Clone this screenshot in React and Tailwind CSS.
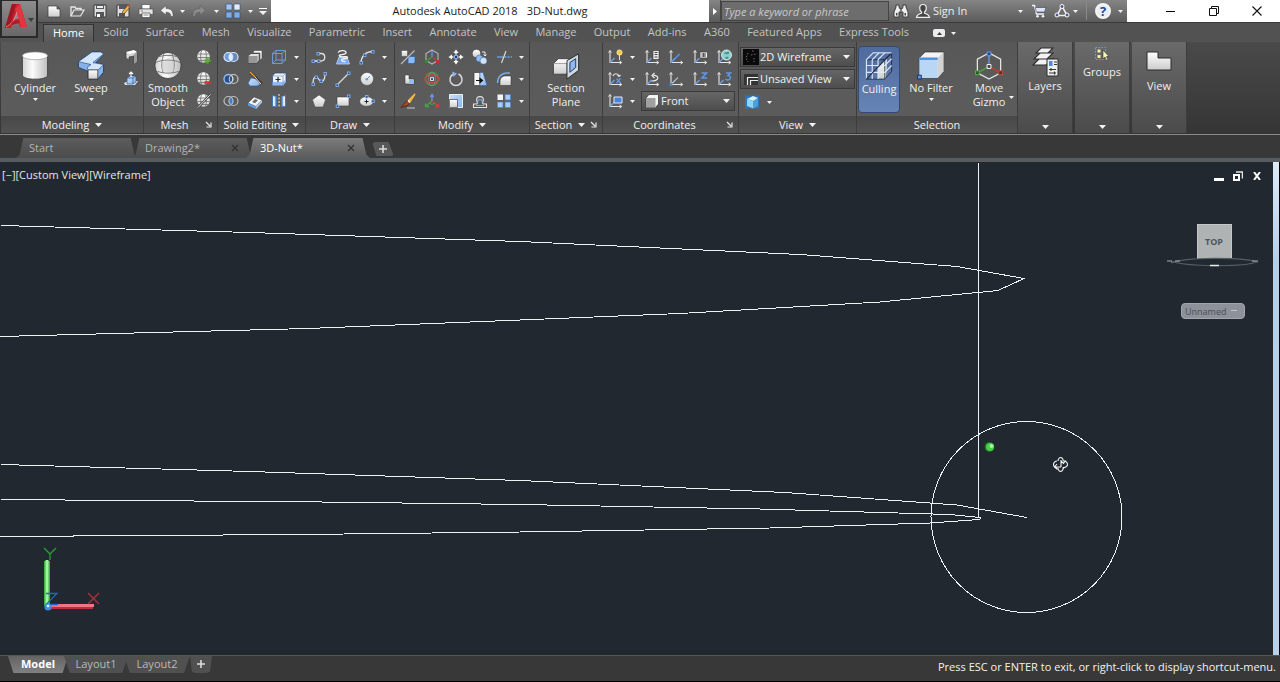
import React, { useState } from "react";

const ribbonTabs = [
  "Home",
  "Solid",
  "Surface",
  "Mesh",
  "Visualize",
  "Parametric",
  "Insert",
  "Annotate",
  "View",
  "Manage",
  "Output",
  "Add-ins",
  "A360",
  "Featured Apps",
  "Express Tools",
];

/* ---------- icon helpers ---------- */

const W = "url(#gWhite)";
const B = "url(#gBlue)";
const G = "url(#gGray)";

function Icon({ children, className = "h-4 w-4", box = "0 0 16 16" }) {
  return (
    <svg viewBox={box} className={`${className} shrink-0`} fill="none" aria-hidden="true">
      {children}
    </svg>
  );
}

function Caret({ className = "h-[3px] w-[5px]" }) {
  return (
    <svg viewBox="0 0 6 4" preserveAspectRatio="none" className={`${className} shrink-0`} aria-hidden="true">
      <path d="M0 0h6L3 4z" fill="#f2f2f2" />
    </svg>
  );
}

// small square node used on the curve icons
function Node({ x, y }) {
  return <rect x={x - 1} y={y - 1} width="2.5" height="2.5" fill="#2f4a78" stroke="#86b0ee" strokeWidth="0.9" />;
}

// the x / y axes shared by the UCS icons
function Axes() {
  return (
    <>
      <path d="M3 2v11.5h11" stroke="#e6e6e6" strokeWidth="1.1" />
      <path d="M1.6 3.6L3 1.4l1.4 2.2M12.6 12l2.2 1.5-2.2 1.5" stroke="#e6e6e6" />
      <path d="M3 13.5L7.5 9" stroke="#6fa0ea" strokeWidth="1.2" />
    </>
  );
}

const globe = (
  <>
    <circle cx="7.5" cy="7.5" r="6.2" fill={W} />
    <path d="M2 5h11M1.5 8.5h12M3 11.5h9M5.5 1.8c-1.2 3-1.2 8 0 11.4M9.5 1.8c1.2 3 1.2 8 0 11.4" stroke="#6c6c6c" strokeWidth="0.8" />
  </>
);

const icons = {
  // quick access
  newFile: (
    <path d="M2 3h9l3 3v8H2zM11 3v3h3" fill={W} stroke="#3b3b3b" strokeWidth="0.7" />
  ),
  open: (
    <>
      <path d="M2 13V4h4l1 1.5h5V7" stroke="#e9e9e9" strokeWidth="1.3" />
      <path d="M2 13l3-6h10l-3.5 6z" fill="#6a6a6a" stroke="#e9e9e9" strokeWidth="1.2" />
    </>
  ),
  save: (
    <>
      <path d="M2 2h12v12H2z" fill="#dedede" stroke="#3a3a3a" />
      <path d="M4 2h8v4H4z" fill="#55595f" />
      <path d="M5 3h6v2H5z" fill="#eee" />
      <path d="M4 9h8v5H4z" fill="#53575c" />
      <path d="M5 11h3v3H5z" fill="#fff" />
    </>
  ),
  saveAs: (
    <>
      <path d="M2 2h12v12H2z" fill="#dedede" stroke="#3a3a3a" />
      <path d="M4 2h8v4H4z" fill="#55595f" />
      <path d="M4 10h6v4H4z" fill="#53575c" />
      <path d="M7 11l1-3 5-6 2 2-5 6z" fill="#f2b649" stroke="#5c3b12" strokeWidth="0.7" />
      <path d="M12 3l2 2 1.2-1.2-2-2z" fill="#d5662d" />
    </>
  ),
  print: (
    <>
      <path d="M4 1.5h8V6H4z" fill="#fff" stroke="#444" strokeWidth="0.6" />
      <path d="M1 6h14v5.5H1z" fill="#e4e4e4" stroke="#444" strokeWidth="0.6" />
      <path d="M4 10h8v4.5H4z" fill="#fff" stroke="#444" strokeWidth="0.7" />
      <path d="M5.5 12h5M3 8h2" stroke="#666" strokeWidth="0.8" />
    </>
  ),
  undo: <path d="M7 2.5L1.5 7.5 7 12V9.3c3 0 4.500.7 5 4.200h2c.5-5.500-2-8-7-8z" fill="#efefef" stroke="#444" strokeWidth="0.5" />,
  redo: <path d="M9 2.500l5.500 5L9 12V9.300c-3 0-4.500.7-5 4.200H2c-.5-5.500 2-8 7-8z" fill="#8b8b8b" stroke="#5a5a5a" strokeWidth="0.5" />,
  tiles: (
    <>
      <path d="M1 1h6v6H1z" fill="#9fc4f3" stroke="#2c4c7c" strokeWidth="0.6" />
      <path d="M9 1h6v6H9z" fill="#e2edfb" stroke="#2c4c7c" strokeWidth="0.6" />
      <path d="M1 9h6v6H1zM9 9h6v6H9z" fill="#7cabe8" stroke="#2c4c7c" strokeWidth="0.6" />
    </>
  ),
  binoculars: (
    <>
      <path d="M3 2h3v2l1 2h2l1-2V2h3v2l2 5v5h-5V9H6v5H1V9l2-5z" fill="#eeeeee" stroke="#333" strokeWidth="0.9" />
      <path d="M3 10h1.500v2.500H3zM11.500 10H13v2.500h-1.500zM7.300 6.500h1.400v2H7.300z" fill="#444" />
    </>
  ),
  user: (
    <path d="M8 1.500c2.300 0 3.300 1.600 3.300 3.600 0 1.700-.8 3.200-1.800 3.900v1.200c2.500.7 4.500 1.200 5 4.100h-13c.5-2.900 2.500-3.400 5-4.100V9c-1-.7-1.800-2.200-1.800-3.900 0-2 1-3.600 3.300-3.600z" fill="#444" stroke="#efefef" strokeWidth="1.200" />
  ),
  cart: (
    <>
      <path d="M1 2.500h2.500L5.500 11h7.500" stroke="#f3f3f3" strokeWidth="1.400" />
      <path d="M4.200 4.500H15L13.500 9H5.300z" fill="#dfe4f4" stroke="#34406b" strokeWidth="0.6" />
      <circle cx="6.500" cy="13.300" r="1.300" fill="#f3f3f3" />
      <circle cx="12" cy="13.300" r="1.300" fill="#f3f3f3" />
    </>
  ),
  exchange: (
    <>
      <path d="M8 3L3 12.500h10z" stroke="#f0f0f0" strokeWidth="1.600" />
      <circle cx="8" cy="3.500" r="2" fill="#4a5b8d" stroke="#fff" />
      <circle cx="3" cy="12" r="2" fill="#4a5b8d" stroke="#fff" />
      <circle cx="13" cy="12" r="2" fill="#4a5b8d" stroke="#fff" />
    </>
  ),

  // modeling
  polysolid: (
    <>
      <path d="M3 3l8-2 3 2v9.500L11 15V7L6 8v3L3 9z" fill="#d6d6d6" stroke="#3c3c3c" strokeWidth="0.7" />
      <path d="M3 3l8-2 3 2-8 2z" fill="#fff" />
      <path d="M11 5.500l3-2.500v9.500L11 15z" fill="#9b9b9b" />
    </>
  ),
  presspull: (
    <>
      <path d="M1 12l4-2h10l-3 4H2z" fill="#e5e5e5" />
      <path d="M4 7l3-2h6v6l-3 2H4z" fill={B} stroke="#2b5796" strokeWidth="0.7" />
      <path d="M4 7h6v6M10 7l3-2" stroke="#2b5796" strokeWidth="0.7" />
      <path d="M8 6V1M6 3l2-2 2 2" stroke="#fff" strokeWidth="1.100" />
    </>
  ),

  // mesh
  meshMore: (
    <>
      {globe}
      <path d="M11.500 8.500v6M8.500 11.500h6" stroke="#56b32b" strokeWidth="2.400" />
    </>
  ),
  meshLess: (
    <>
      {globe}
      <path d="M8.500 11.500h6.500" stroke="#c9392e" strokeWidth="2.600" />
    </>
  ),
  meshCrease: (
    <>
      {globe}
      <path d="M2 14.500L14.500 1.500" stroke="#444" strokeWidth="2.400" />
      <path d="M2 14.500L14.500 1.500" stroke="#e8e8e8" strokeWidth="1" />
    </>
  ),

  // solid editing
  union: (
    <>
      <circle cx="5.500" cy="8" r="4.500" fill="#6f9de0" stroke="#dce9fb" strokeWidth="1.200" />
      <circle cx="10.500" cy="8" r="4.500" fill="#6f9de0" fillOpacity="0.700" stroke="#dce9fb" strokeWidth="1.200" />
      <ellipse cx="8" cy="8" rx="1.900" ry="3.600" fill="#e3eefc" />
    </>
  ),
  subtract: (
    <>
      <circle cx="10.500" cy="8" r="4.500" stroke="#c9c9c9" strokeWidth="1.200" />
      <circle cx="5.500" cy="8" r="4.500" fill="#26508f" stroke="#9cc3f5" strokeWidth="1.300" />
      <path d="M8 4.300c-2.300 2-2.300 5.400 0 7.400 2.200-2 2.200-5.400 0-7.400z" fill="#4d4d4d" stroke="#e8f0fb" strokeWidth="0.800" />
    </>
  ),
  intersect: (
    <>
      <circle cx="5.500" cy="8" r="4.500" stroke="#bdbdbd" strokeWidth="1.200" />
      <circle cx="10.500" cy="8" r="4.500" stroke="#bdbdbd" strokeWidth="1.200" />
      <path d="M8 4.300c-2.300 2-2.300 5.400 0 7.400 2.200-2 2.200-5.400 0-7.400z" fill="#3d7cc9" stroke="#8fbcf2" strokeWidth="0.800" />
    </>
  ),
  extrudeFaces: (
    <>
      <path d="M7 1.500h8v8l-2 1.500V4H6z" fill="#f5f5f5" stroke="#4b4b4b" strokeWidth="0.600" />
      <path d="M1.500 7L4 5h8.500v6L10 14H1.500z" fill="#b5b5b5" stroke="#3d3d3d" strokeWidth="0.700" />
      <path d="M1.500 7H10v7H1.500z" fill="#989898" />
      <path d="M1.500 7L4 5h8.500L10 7z" fill="#e2e2e2" />
    </>
  ),
  slice: (
    <>
      <path d="M1 12l3-5 7 1 3 5-4 2H3z" fill={B} stroke="#2f5c9c" strokeWidth="0.600" />
      <path d="M3 1l9 9 2.500 3" stroke="#3a2411" strokeWidth="2.400" />
      <path d="M3 1l5 5" stroke="#f0a63c" strokeWidth="1.400" />
      <path d="M8 6l6 7" stroke="#f2f2f2" strokeWidth="1" />
    </>
  ),
  thicken: (
    <>
      <path d="M1 10l6-6 8 3-6 6.500z" fill="#f4f4f4" stroke="#474747" strokeWidth="0.600" />
      <path d="M1 10l8 3.500V16L1 12.500z" fill="#5e9be8" />
      <path d="M9 13.500L15 7v2.500L9 16z" fill="#a9cbf5" />
      <path d="M5 9l3-3 3 1.200-3 3z" fill="#6b6b6b" />
    </>
  ),
  cubeEdges: (
    <path d="M1.500 4.500h9.500v10H1.500zM5 1.500h9.500V11H5zM1.500 4.500L5 1.500M11 4.500l3.500-3M1.500 14.500L5 11M11 14.500l3.500-3.500" stroke="#7199d4" strokeWidth="1" />
  ),
  offsetFace: (
    <>
      <path d="M1.500 5l2.500-3h11v9l-3 3.500H1.500z" fill="#f2f2f2" stroke="#2d4f84" strokeWidth="0.800" />
      <path d="M1.500 11H12v3.500H1.500zM12 11l3-3v3l-3 3.500z" fill="#8fbaf0" />
      <path d="M1.500 5H12v9.500M12 5l3-3" stroke="#7c98c2" strokeWidth="0.700" />
      <path d="M4.500 8.500h5M7 6v5" stroke="#1b2b44" strokeWidth="1.200" />
    </>
  ),
  mirror3d: (
    <>
      <path d="M1.500 2.500l4 1v10h-4zM14.500 2.500l-4 1v10h4z" fill="#e7f0fb" stroke="#3b6eb3" strokeWidth="0.900" />
      <path d="M4.500 3.500v10M11.500 3.500v10" stroke="#6ba3ea" strokeWidth="1.200" />
      <path d="M8 1v14" stroke="#f0f0f0" strokeDasharray="2 1.500" />
    </>
  ),

  // draw
  polyline: (
    <>
      <path d="M2 12h8c5 0 5-7.500 0-7.500H8" stroke="#e2e2e2" strokeWidth="1.300" />
      <Node x={2} y={12} />
      <Node x={7.500} y={12} />
      <Node x={7} y={4.500} />
    </>
  ),
  spline: (
    <>
      <path d="M2 13c0-9 4-8 6-4.500s6 3 6-6" stroke="#e2e2e2" strokeWidth="1.300" />
      <Node x={2} y={13} />
      <Node x={5} y={6} />
      <Node x={10} y={10} />
      <Node x={14} y={2.500} />
    </>
  ),
  polygon: <path d="M8 2l6.500 4.700L12 14H4L1.500 6.700z" fill={W} stroke="#444" strokeWidth="0.500" />,
  helix: (
    <>
      <path d="M4 8h8l2.500 7h-13z" fill="#78aaf0" stroke="#bcd7fa" strokeWidth="0.800" />
      <path d="M3 3.500c2-3 9-2 8 .500S3 5 4.500 7s8-.5 8 1.500S6 9 6.500 11s3 1.500 4 1.500" stroke="#f4f4f4" strokeWidth="1.300" />
    </>
  ),
  line: (
    <>
      <path d="M2 14L14 2" stroke="#d9d9d9" strokeWidth="1.200" />
      <Node x={2} y={14} />
      <Node x={13.500} y={2} />
    </>
  ),
  rectangle: (
    <>
      <path d="M2 4h12v9H2z" fill={W} stroke="#444" strokeWidth="0.600" />
      <Node x={2.200} y={13} />
      <Node x={13.500} y={3} />
    </>
  ),
  arc: (
    <>
      <path d="M2 14C2 8 6 2.500 14 2.500" stroke="#e2e2e2" strokeWidth="1.300" />
      <Node x={2} y={13.500} />
      <Node x={5.500} y={6} />
      <Node x={13.500} y={2.500} />
    </>
  ),
  circle: (
    <>
      <circle cx="8" cy="8" r="6.500" fill={W} stroke="#3f3f3f" strokeWidth="0.500" />
      <path d="M8 8l3-3" stroke="#5b8fdc" />
      <circle cx="7.800" cy="8.300" r="1.300" fill="#6b9de6" />
    </>
  ),
  ellipse: (
    <>
      <ellipse cx="7.500" cy="8.500" rx="6.800" ry="4.800" fill={W} stroke="#3f3f3f" strokeWidth="0.500" />
      <path d="M7.500 6.500v4M5.500 8.500h4" stroke="#222" />
      <Node x={7.500} y={3.500} />
      <Node x={13.800} y={8} />
    </>
  ),

  // modify
  move3d: (
    <>
      <path d="M1.500 1.500h6v6h-6z" fill={W} stroke="#444" strokeWidth="0.500" />
      <path d="M8 9l1.500-1.500H15V13l-1.500 1.500H8z" fill="#8ab9f4" stroke="#2d5ea3" strokeWidth="0.700" />
      <path d="M1 15L14.500 1.500" stroke="#bdbdbd" strokeWidth="1.100" />
    </>
  ),
  solidBox: (
    <>
      <path d="M5 4h4v4h5v5H5z" fill={W} stroke="#3e3e3e" strokeWidth="0.600" />
      <path d="M9 9h5v4H9z" fill="#94bcf2" />
    </>
  ),
  brush: (
    <>
      <path d="M7 15h8" stroke="#c8c8c8" />
      <path d="M15 1L8 8l1.500 1.500z" fill="#f5b63d" stroke="#f5b63d" strokeWidth="1.500" />
      <path d="M8 7.500l2 2-2 3-7 2c2-1.500 3-5.500 7-7z" fill="#a9441f" stroke="#3b1a0b" strokeWidth="0.600" />
      <path d="M8 7.500l2 2" stroke="#fff" strokeWidth="1.300" />
    </>
  ),
  gizmoHex: (
    <>
      <path d="M8 1l6 3.500v7L8 15l-6-3.500v-7z" stroke="#b4b4b4" strokeWidth="1.100" />
      <path d="M8 8V2" stroke="#5e8fe0" strokeWidth="1.500" />
      <path d="M8 8l-5.500 4" stroke="#3d9a3d" strokeWidth="1.500" />
      <path d="M8 8l5.500 4" stroke="#c63c37" strokeWidth="1.500" />
      <path d="M0.800 11h3v3h-3z" fill="#318a31" />
      <path d="M12 11h3v3h-3z" fill="#bd342e" />
    </>
  ),
  rotate3d: (
    <>
      <circle cx="8" cy="8" r="6.500" stroke="#43a043" strokeWidth="1.300" />
      <ellipse cx="8" cy="8" rx="7" ry="4" stroke="#d6433c" strokeWidth="1.400" />
      <ellipse cx="8" cy="8" rx="3.500" ry="6.500" stroke="#8a8a8a" strokeWidth="0.800" />
      <path d="M6.500 6.500h3v3h-3z" fill="#2b57a6" stroke="#fff" strokeWidth="0.800" />
    </>
  ),
  scale3d: (
    <>
      <path d="M8 8V2M6.300 4L8 1.500 9.700 4" stroke="#6a9cea" strokeWidth="1.300" />
      <path d="M8 8l-6 5M1.500 10.500v3H5" stroke="#43a643" strokeWidth="1.300" />
      <path d="M8 8l6 5M14.500 10.500v3H11" stroke="#cc423b" strokeWidth="1.300" />
      <path d="M5 10l3 1.500 3-1.500" stroke="#43a643" />
    </>
  ),
  move: (
    <>
      <path d="M8 0.500L10.500 4h-5zM8 15.500L5.500 12h5zM0.500 8L4 5.500v5zM15.500 8L12 10.500v-5z" fill="#fafafa" />
      <path d="M8 3v2.500M8 10.500V13M3 8h2.500M10.500 8H13" stroke="#fafafa" strokeWidth="1.500" />
      <path d="M6.500 6.500h3v3h-3z" fill="#1d3a6b" stroke="#7eaef0" />
    </>
  ),
  rotate: (
    <>
      <path d="M5.500 3a6 6 0 1 0 5 0" stroke="#dadada" strokeWidth="1.500" />
      <path d="M4 0.500l5 2-3.500 3.500z" fill="#8ab7f3" />
    </>
  ),
  scale: (
    <>
      <path d="M1.500 1.500h13v13h-13z" fill={B} stroke="#e8f1fc" />
      <path d="M1.500 6.500h8v8h-8z" fill={W} stroke="#444" strokeWidth="0.700" />
    </>
  ),
  copy: (
    <>
      <circle cx="4.500" cy="4.500" r="3.800" fill={W} />
      <circle cx="7.500" cy="9.500" r="3.500" fill="#8fbcf4" stroke="#34557f" strokeWidth="0.500" />
      <circle cx="11.500" cy="11.800" r="3.500" fill="#cfe2fa" stroke="#34557f" strokeWidth="0.500" />
      <path d="M10 3h3v3.500M11.500 5.500L13 7l1.500-1.500" stroke="#ededed" />
    </>
  ),
  mirror: (
    <>
      <path d="M2 1.500h6v13H2z" fill="#f6f6f6" stroke="#3c3c3c" strokeWidth="0.700" />
      <path d="M8 1.500h3l4 13H8z" fill={B} stroke="#34639f" strokeWidth="0.600" />
      <path d="M4 9.500h6M8 7.500l2.500 2L8 11.500z" stroke="#111" strokeWidth="1.100" fill="#111" />
    </>
  ),
  offset: (
    <>
      <path d="M1.500 14.500h13v-3.500h-3c-1 0-1-1.500-.5-2.500 3-6.500-9-6.500-6 0 .5 1 .5 2.500-.5 2.500h-3z" stroke="#e4e4e4" strokeWidth="1.100" />
      <path d="M4 12.500h8M6 9.500c-1.500-4 5.500-4 4 0" stroke="#79abed" strokeWidth="1.200" />
    </>
  ),
  trim: (
    <>
      <path d="M1 8h6" stroke="#6fa5ee" strokeWidth="1.300" />
      <path d="M8.500 8H16" stroke="#6fa5ee" strokeWidth="1.300" strokeDasharray="2 1.200" />
      <path d="M5.500 14L10 2" stroke="#dedede" strokeWidth="1.100" />
    </>
  ),
  fillet: (
    <>
      <path d="M4 14.500V11c0-4 2-6 6-6h5v9.500z" fill={W} stroke="#3c3c3c" strokeWidth="0.600" />
      <path d="M1.500 12C1.500 6 5.500 2 11 2h3" stroke="#79abed" strokeWidth="1.400" />
    </>
  ),
  array: (
    <>
      <path d="M1.500 1.500h5.500v5.500H1.500z" fill="#f4f4f4" />
      <path d="M9 1.500h5.500v5.500H9zM1.500 9h5.500v5.500H1.500zM9 9h5.500v5.500H9z" fill="#a9caf5" stroke="#4a7dc4" strokeWidth="0.700" />
    </>
  ),

  // coordinates
  ucsOrigin: (
    <>
      <Axes />
      <path d="M12.500 6v5" stroke="#ddd" />
      <circle cx="12.500" cy="3.500" r="2.600" fill="#fbc441" stroke="#fff1b5" strokeWidth="0.800" />
    </>
  ),
  ucsX: (
    <>
      <Axes />
      <path d="M6 5c1-3 5-3 6 0M10.500 4l1.500 1.500L13.500 4" stroke="#e8e8e8" strokeWidth="1.100" />
      <path d="M9.500 7.500l4 4.500M13.500 7.500l-4 4.500" stroke="#5e98ec" strokeWidth="1.300" />
    </>
  ),
  ucsView: (
    <>
      <Axes />
      <path d="M7 4h8v6H7z" fill="#4d83d6" stroke="#dfeafb" />
    </>
  ),
  ucsNamed: (
    <>
      <Axes />
      <path d="M9 1.500h6v9H9z" fill="#ededed" stroke="#333" strokeWidth="0.600" />
      <path d="M10.500 3.500h3M10.500 5.500h3M10.500 8h3" stroke="#444" />
    </>
  ),
  ucsPrev: (
    <>
      <Axes />
      <path d="M7.500 10c8 0 8-6 2-5.500M10.500 2L8 4.500 10.500 7" stroke="#ececec" strokeWidth="1.200" />
    </>
  ),
  ucsWorldBlue: (
    <>
      <Axes />
      <path d="M3 13.500L11.500 5" stroke="#5b95ea" strokeWidth="1.400" />
    </>
  ),
  ucsOriginMove: (
    <>
      <Axes />
      <path d="M3 13.500L10 6.500" stroke="#b8b8b8" strokeWidth="1.100" />
      <path d="M1.500 12h3v3h-3z" fill="#4d83d6" />
    </>
  ),
  ucsObject: (
    <>
      <Axes />
      <path d="M8 3h7.500v6H8z" fill="#ededed" stroke="#333" strokeWidth="0.600" />
      <path d="M9.500 5h4.500M9.500 7h4.500M11.700 4v4" stroke="#444" />
    </>
  ),
  ucsZ: (
    <>
      <Axes />
      <path d="M9.500 2h5L10 7h5" stroke="#5e98ec" strokeWidth="1.500" />
    </>
  ),
  ucsWorld: (
    <>
      <Axes />
      <circle cx="10.500" cy="6" r="5" fill="#8fd0cf" stroke="#e7fbfa" strokeWidth="0.800" />
      <path d="M8 4c1-1.500 2.500 0 3.500-1s1.500 0 1.500 1-2 2-3 1-1.500 1-2-1zM9 9c1-2 4-1 3.500 0s-2 1.500-3.500 0z" fill="#3f9490" />
    </>
  ),
  ucs3: (
    <>
      <Axes />
      <path d="M10 2h4.500L12 4.500c3.500 0 3 4.500-.5 4.500-1 0-1.500-.5-2-1" stroke="#5e98ec" strokeWidth="1.400" />
    </>
  ),
  frontCube: (
    <>
      <path d="M2 5l3-3.500h9.500V11L11.500 14.500H2z" fill="#f3f3f3" stroke="#333" strokeWidth="0.700" />
      <path d="M2 5h9.500v9.500H2z" fill="#a0a0a0" />
    </>
  ),
  wireStyle: (
    <>
      <path d="M0 0h16v16H0z" fill="#0a0a0a" />
      <path d="M5 4l-2 5 2 4M9 2h3M8 6l5-1M11 9v4" stroke="#9a9a9a" strokeWidth="0.700" strokeDasharray="1.500 1.500" />
    </>
  ),
  unsavedView: (
    <>
      <path d="M1 3h14v11H1z" fill="#333" />
      <path d="M4.500 14V6.500H15M7.500 14V9.500H15" stroke="#ececec" strokeWidth="1.200" />
    </>
  ),
  viewBox: (
    <>
      <path d="M1 1.500h14v13H1z" fill="#2d76b9" />
      <path d="M3 5l6-3 5 2-4.500 3z" fill="#d6f1ff" />
      <path d="M3 5l6.500 2v7.500L3 12z" fill="#8fd3f8" />
      <path d="M9.500 7L14 4v8l-4.500 2.500z" fill="#48a0dd" />
    </>
  ),
};

function ToolButton({ label, icon }) {
  return (
    <button aria-label={label} className="flex h-[22px] w-6 items-center justify-center">
      <Icon>{icons[icon]}</Icon>
    </button>
  );
}

function DropButton({ label }) {
  return (
    <button aria-label={label} className="flex h-[22px] w-[10px] items-center justify-center">
      <Caret />
    </button>
  );
}

function BigButton({ label, className = "", caret, children }) {
  return (
    <button className={`flex h-[67px] flex-col items-center rounded-sm pt-1 leading-[14px] ${className}`}>
      <Icon className="h-[31px] w-8" box="0 0 32 32">
        {children}
      </Icon>
      <span>{label}</span>
      {caret && <Caret className="mt-[3px] h-[3px] w-[5px]" />}
    </button>
  );
}

function Panel({ title, className = "", arrow, launcher, children }) {
  return (
    <section className={`flex shrink-0 flex-col border-r border-[#3d3d3d] bg-linear-to-b from-[#585858] to-[#5d5d5d] ${className}`}>
      <div className="flex h-[74px] pt-1">{children}</div>
      <div className="flex h-[17px] items-center bg-linear-to-b from-[#484848] to-[#525252]">
        <button className="flex flex-1 items-center justify-center gap-1.5 leading-4">
          {title}
          {arrow && <Caret className="h-1 w-[7px]" />}
        </button>
        {launcher && (
          <button aria-label={`${title} settings`} className="pr-[5px]">
            <svg viewBox="0 0 7 7" className="h-[7px] w-[7px]" fill="none">
              <path d="M1 1l4 4M6 1.500V6H1.500" stroke="#e8e8e8" strokeWidth="1.200" />
            </svg>
          </button>
        )}
      </div>
    </section>
  );
}

// rows of small icons that end in a flyout arrow
function ToolGrid({ rows, name }) {
  return (
    <div className="flex flex-col px-px">
      {rows.map((row, i) => (
        <div key={i} className="flex">
          {row.map((key) => (
            <ToolButton key={key} label={key} icon={key} />
          ))}
          <DropButton label={`${name} more ${i + 1}`} />
        </div>
      ))}
    </div>
  );
}

function RibbonSelect({ label, icon, options, className = "" }) {
  return (
    <div className={`flex h-5 items-center border border-[#3a3a3a] bg-linear-to-b from-[#666] to-[#4e4e4e] px-0.5 ${className}`}>
      <Icon>{icons[icon]}</Icon>
      <select aria-label={label} className="min-w-0 flex-1 appearance-none bg-transparent pl-px text-[#f2f2f2] outline-none">
        {options.map((o) => (
          <option key={o}>{o}</option>
        ))}
      </select>
      <Caret className="pointer-events-none mr-0.5 h-1 w-[7px]" />
    </div>
  );
}

function CollapsedPanel({ label, labelClass = "", children }) {
  return (
    <button className="mr-0.5 flex w-[55px] shrink-0 flex-col items-center border-r border-[#3d3d3d] bg-linear-to-b from-[#6a6a6a] to-[#4b4b4b] pt-1">
      {children}
      <span className={labelClass}>{label}</span>
      <Caret className="mt-auto mb-1 h-1 w-[7px]" />
    </button>
  );
}

function TitleBar() {
  return (
    <div className="flex h-[23px] border-b border-[#3a3a3a]">
      <div className="flex w-[233px] shrink-0 items-center bg-linear-to-b from-[#858585] to-[#5b5b5b] pl-1">
        {["newFile", "open", "save", "saveAs", "print"].map((key) => (
          <button key={key} aria-label={key} className="flex w-[23px] justify-center">
            <Icon>{icons[key]}</Icon>
          </button>
        ))}
        <button aria-label="undo" className="flex w-5 justify-center">
          <Icon>{icons.undo}</Icon>
        </button>
        <DropButton label="undo list" />
        <button aria-label="redo" className="flex w-6 justify-center">
          <Icon>{icons.redo}</Icon>
        </button>
        <DropButton label="redo list" />
        <button aria-label="workspace" className="flex w-6 justify-center">
          <Icon>{icons.tiles}</Icon>
        </button>
        <DropButton label="workspace list" />
        <button aria-label="customize" className="ml-1 flex flex-col items-center gap-0.5">
          <span className="h-px w-2 bg-white" />
          <Caret className="h-1 w-2" />
        </button>
      </div>

      <div className="flex flex-1 items-center justify-center gap-[9px] bg-white text-[#1c1c1c]">
        <span>Autodesk AutoCAD 2018</span>
        <span>3D-Nut.dwg</span>
      </div>

      <div className="flex w-[418px] shrink-0 items-center bg-linear-to-b from-[#858585] to-[#5b5b5b]">
        <button aria-label="expand search" className="flex h-full w-3 items-center justify-center border-r border-[#444]">
          <svg viewBox="0 0 4 7" className="h-[7px] w-1">
            <path d="M0 0l4 3.500L0 7z" fill="#fff" />
          </svg>
        </button>
        <input
          aria-label="Search"
          placeholder="Type a keyword or phrase"
          className="h-5 w-[168px] border border-[#444] bg-[#6d6d6d] pl-0.5 italic outline-none placeholder:text-[#c9c9c9]"
        />
        <button aria-label="search" className="ml-1 flex w-4 justify-center">
          <Icon>{icons.binoculars}</Icon>
        </button>
        <button className="ml-[6px] flex items-center gap-0.5 text-[#eee]">
          <Icon>{icons.user}</Icon>
          Sign In
        </button>
        <span className="flex-1" />
        <DropButton label="account" />
        <button aria-label="app store" className="ml-[6px]">
          <Icon>{icons.cart}</Icon>
        </button>
        <button aria-label="stay connected" className="ml-[7px]">
          <Icon>{icons.exchange}</Icon>
        </button>
        <DropButton label="connect list" />
        <span className="ml-[6px] h-[18px] w-px bg-[#8a8a8a]" />
        <button aria-label="help" className="ml-2 flex h-4 w-4 items-center justify-center rounded-full border-2 border-[#f4f4f4] bg-[#e8edf8] text-[13px] leading-none font-bold text-[#27489a]">
          ?
        </button>
        <span className="mr-0.5 ml-1">
          <DropButton label="help list" />
        </span>
      </div>

      <div className="flex w-[153px] shrink-0 justify-end bg-white pr-0.5">
        <button aria-label="Minimize" className="flex w-[43px] items-center justify-center">
          <span className="h-px w-[9px] bg-black" />
        </button>
        <button aria-label="Restore" className="flex w-[43px] items-center justify-center">
          <svg viewBox="0 0 10 10" className="h-[10px] w-[10px]" fill="none">
            <path d="M.5 2.500h7v7h-7zM2.500 2.500v-2h7v7h-2" stroke="#111" />
          </svg>
        </button>
        <button aria-label="Close" className="flex w-[43px] items-center justify-center">
          <svg viewBox="0 0 10 10" className="h-[10px] w-[10px]" fill="none">
            <path d="M.5.5l9 9M9.500.5l-9 9" stroke="#111" strokeWidth="1.100" />
          </svg>
        </button>
      </div>
    </div>
  );
}

function Ribbon() {
  return (
    <div className="flex h-[93px] border-b border-[#8a8a8a] bg-linear-to-b from-[#4a4a4a] to-[#353535] pb-px pl-px text-[#f0f0f0]">
      <Panel title="Modeling" arrow className="w-[143px]">
        <BigButton label="Cylinder" caret className="ml-[6px] w-14">
          <path d="M3 6v20c0 5.500 26 5.500 26 0V6z" fill={G} stroke="#333" strokeWidth="0.800" />
          <ellipse cx="16" cy="6" rx="13" ry="4" fill="#fdfdfd" stroke="#8a8a8a" strokeWidth="0.600" />
        </BigButton>
        <BigButton label="Sweep" caret className="w-14">
          <path d="M3 12L17 2h9l3 3-8 8 8 2v8l-6 7H13v-8L3 18z" fill="#86b2ec" stroke="#1f3b66" strokeWidth="0.900" />
          <path d="M3 12L17 2h9l3 2-11 9 11 2-6 6H13l-1-3 4-3z" fill="#d3e5fb" stroke="#274a80" strokeWidth="0.700" />
          <path d="M13 20.500h10V30H13z" fill={W} stroke="#333" strokeWidth="0.800" />
        </BigButton>
        <div className="flex flex-col">
          <ToolButton label="Polysolid" icon="polysolid" />
          <ToolButton label="Presspull" icon="presspull" />
        </div>
      </Panel>

      <Panel title="Mesh" launcher className="w-[74px]">
        <BigButton label={<>Smooth<br />Object</>} className="w-12">
          <circle cx="16" cy="16" r="13.500" fill={G} stroke="#333" strokeWidth="0.800" />
          <path d="M3 13c8-3.500 18-3.500 26 0M5 22c7 2.500 15 2.500 22 0M12 3.500C9 11 9 18 11 23.500M20 3.500c3 7.500 3 14.500 1 20M6 7c6-2 14-2 20 0" stroke="#777" />
          <path d="M10 12c4-.7 8-.7 12 0v10c-4 .8-8 .8-11.500 0-.7-3-.8-6-.5-10z" fill="#cfcfcf" fillOpacity="0.700" />
        </BigButton>
        <div className="flex flex-col">
          <ToolButton label="Smooth More" icon="meshMore" />
          <ToolButton label="Smooth Less" icon="meshLess" />
          <ToolButton label="Crease" icon="meshCrease" />
        </div>
      </Panel>

      <Panel title="Solid Editing" arrow className="w-[88px]">
        <ToolGrid
          name="Solid Editing"
          rows={[
            ["union", "extrudeFaces", "cubeEdges"],
            ["subtract", "slice", "offsetFace"],
            ["intersect", "thicken", "mirror3d"],
          ]}
        />
      </Panel>

      <Panel title="Draw" arrow className="w-[89px]">
        <ToolGrid
          name="Draw"
          rows={[
            ["polyline", "helix", "arc"],
            ["spline", "line", "circle"],
            ["polygon", "rectangle", "ellipse"],
          ]}
        />
      </Panel>

      <Panel title="Modify" arrow className="w-[135px]">
        <ToolGrid
          name="Modify"
          rows={[
            ["move3d", "gizmoHex", "move", "copy", "trim"],
            ["solidBox", "rotate3d", "rotate", "mirror", "fillet"],
            ["brush", "scale3d", "scale", "offset", "array"],
          ]}
        />
      </Panel>

      <Panel title="Section" arrow launcher className="w-[73px]">
        <BigButton label={<>Section<br />Plane</>} className="mx-auto">
          <path d="M3 14l5-5h12v12l-4 4H3z" fill={W} stroke="#333" strokeWidth="0.800" />
          <path d="M3 14h14v10M17 14l4-5" stroke="#8a8a8a" strokeWidth="0.800" />
          <path d="M17 11L29 4v17l-12 9z" fill="#dce5f0" fillOpacity="0.900" stroke="#2d2d2d" />
          <path d="M20 13l6-4v9l-6 5z" fill="#8fb9ee" stroke="#1c3b69" />
        </BigButton>
      </Panel>

      <Panel title="Coordinates" launcher className="w-[136px]">
        <div className="flex flex-col">
          {[
            ["ucsOrigin", ["ucsNamed", "ucsWorldBlue", "ucsObject", "ucsWorld"]],
            ["ucsX", ["ucsPrev", "ucsOriginMove", "ucsZ", "ucs3"]],
          ].map(([first, rest]) => (
            <div key={first} className="flex">
              <ToolButton label={first} icon={first} />
              <DropButton label={`${first} list`} />
              <span className="w-[3px]" />
              {rest.map((key) => (
                <ToolButton key={key} label={key} icon={key} />
              ))}
            </div>
          ))}
          <div className="flex items-center">
            <ToolButton label="UCS view" icon="ucsView" />
            <DropButton label="UCS view list" />
            <RibbonSelect
              label="View orientation"
              icon="frontCube"
              options={["Front", "Top", "Left", "Right"]}
              className="ml-1 w-[94px]"
            />
          </div>
        </div>
      </Panel>

      <Panel title="View" arrow className="w-[118px]">
        <div className="flex flex-1 flex-col gap-0.5 px-px pt-px">
          <RibbonSelect label="Visual style" icon="wireStyle" options={["2D Wireframe", "Conceptual", "Realistic"]} />
          <RibbonSelect label="Saved view" icon="unsavedView" options={["Unsaved View", "Top", "Front"]} />
          <div className="flex">
            <ToolButton label="Viewport" icon="viewBox" />
            <DropButton label="Viewport list" />
          </div>
        </div>
      </Panel>

      <Panel title="Selection" className="w-[161px]">
        <BigButton label="Culling" className="ml-px w-[42px] border border-[#324a75] bg-linear-to-b from-[#4f6a9c] to-[#6684b5]">
          <path d="M15 17h8v12h-8zM15 17L24 8v9l-1 12" fill={W} />
          <path d="M3 9l7-7h19v19l-7 8H3zM3 9h19v20M22 9l7-7" stroke="#1d2b42" strokeWidth="0.900" />
          <path d="M3 15h19l7-7M3 22h19l7-7M9 9v20M15 9v20M9 9l7-7M15 9l7-7" stroke="#dbe8fa" strokeWidth="1.200" />
          <path d="M3 9l7-7h19M3 9v20" stroke="#dbe8fa" strokeWidth="1.200" />
          <path d="M3 29L28 3" stroke="#1d2b42" strokeWidth="1.100" />
        </BigButton>
        <BigButton label="No Filter" caret className="w-[62px]">
          <path d="M4 8l6-6h19v20l-6 7H4z" fill="#f3f3f3" stroke="#333" strokeWidth="0.800" />
          <path d="M4 8h19v21H4z" fill="#b9d6f4" />
          <path d="M4 9h19" stroke="#4e8fe0" strokeWidth="2.500" />
          <path d="M23 8l6-6v20l-6 7z" fill="#d2d2d2" />
          <path d="M2 26h4v4H2z" fill="#5a97ea" stroke="#17345f" />
        </BigButton>
        <BigButton label={<>Move<br />Gizmo</>} className="ml-1 w-[46px]">
          <path d="M16 3l12 6.500v14L16 30 4 23.500v-14z" stroke="#e5e5e5" strokeWidth="1.300" />
          <path d="M16 17V4" stroke="#6b9cea" strokeWidth="1.300" />
          <path d="M16 17L4 23.500" stroke="#49a537" strokeWidth="1.500" />
          <path d="M16 17l12 6.500" stroke="#c33f35" strokeWidth="1.500" />
          <path d="M14 2h4v4h-4z" fill="#2b4d86" stroke="#6b9cea" />
          <path d="M2 21.500h4v4H2z" fill="#275f1d" stroke="#55b640" />
          <path d="M26 21.500h4v4h-4z" fill="#7c211b" stroke="#cf4a3f" />
          <path d="M14 15h4v4h-4z" fill="#444" stroke="#fff" />
        </BigButton>
        <span className="mt-10 -ml-[6px]">
          <DropButton label="Gizmo list" />
        </span>
      </Panel>

      <CollapsedPanel label="Layers">
        <Icon className="h-8 w-8" box="0 0 32 32">
          <path d="M4 19l6-6h14l-7 6zM5 13l6-6h13l-6 6zM7 7l5-5h12l-5 5z" fill="#f2f2f2" stroke="#2d2d2d" strokeWidth="1.100" />
          <path d="M18 13h11v17H18z" fill="#efefef" stroke="#2d2d2d" />
          <path d="M20 15h3.500v5H20z" fill="#4b8ade" />
          <path d="M25 16h3M25 18.500h3M20 23.500h7M20 27h7M22 22v3M25.500 25.500v3" stroke="#333" strokeWidth="1.100" />
        </Icon>
      </CollapsedPanel>
      <CollapsedPanel label="Groups" labelClass="mt-0.5">
        <Icon>
          <path d="M1.500 1.500h10v12h-10z" stroke="#6f9fe3" strokeDasharray="1.500 1.500" />
          <path d="M3.500 3.500h3v3h-3zM3.500 9h3v3h-3z" fill="#f5ef9e" />
          <path d="M9 4v9l2-2 1.500 3.500 1.500-.7-1.500-3.300H15z" fill="#fbf7b7" stroke="#333" strokeWidth="0.600" />
        </Icon>
      </CollapsedPanel>
      <CollapsedPanel label="View">
        <Icon className="h-8 w-8" box="0 0 32 32">
          <path d="M4 6h11v6h13v12H4z" fill={W} stroke="#2d2d2d" />
        </Icon>
      </CollapsedPanel>
    </div>
  );
}

function DocumentTabs() {
  const base =
    "flex h-[20px] items-center rounded-t-lg text-left [clip-path:polygon(0_100%,3%_82%,6%_0,94%_0,97%_82%,100%_100%)]";
  return (
    <div className="flex h-[27px] items-end border-b-4 border-[#595c5e] bg-[#383838] pl-4 text-[#b4b4b4]">
      <button className={`${base} w-[122px] bg-linear-to-b from-[#5c5c5c] to-[#4c4c4c] pl-[13px]`}>Start</button>
      <div className={`${base} -ml-[6px] w-[122px] bg-linear-to-b from-[#5c5c5c] to-[#4c4c4c] pl-[13px]`}>
        <button className="flex-1 text-left">Drawing2*</button>
        <CloseMark />
      </div>
      <div className={`${base} -ml-2 w-[124px] bg-linear-to-b from-[#7c7c7c] to-[#5c5c5c] pl-[14px] text-white`}>
        <button className="flex-1 text-left">3D-Nut*</button>
        <CloseMark />
      </div>
      <button
        aria-label="New tab"
        className="mb-0.5 ml-0.5 flex h-[14px] w-[22px] items-center justify-center rounded-tl-sm rounded-br-sm bg-[#585858] [clip-path:polygon(0_0,75%_0,100%_100%,20%_100%)]"
      >
        <PlusMark />
      </button>
    </div>
  );
}

function CloseMark() {
  return (
    <button aria-label="Close tab" className="mr-[15px]">
      <svg viewBox="0 0 8 8" className="h-2 w-2" fill="none">
        <path d="M1 1l6 6M7 1L1 7" stroke="#323232" strokeWidth="1.400" />
      </svg>
    </button>
  );
}

function PlusMark() {
  return (
    <svg viewBox="0 0 8 8" className="h-2 w-2" fill="none">
      <path d="M4 0v8M0 4h8" stroke="#dcdcdc" strokeWidth="1.600" />
    </svg>
  );
}

function Viewport() {
  return (
    <main className="flex flex-1">
      <div className="relative flex-1 overflow-hidden bg-[#21282f]">
        <svg className="absolute inset-0 h-full w-full" fill="none" aria-label="Wireframe model">
          <g stroke="#f0f3f5" strokeWidth="1" shapeRendering="crispEdges">
            <path d="M1 63.500L250 70.500 520 79.500 800 92.500 957 104.500 1024 116.500 998 128.500 880 140 680 151.500 520 158 308 166.500 0 174.500" />
            <path d="M1 302.500L250 309.500 520 318.500 785 330.500 957 343 1027 355.500" />
            <path d="M1 337.500L322 340 520 342.500 760 347 950 352.500 980 355.500 980 357 972 358 930 361 770 366 520 370 300 372.500 0 374.500" />
            <path d="M978.500 1V356" />
            <circle cx="1026.500" cy="355" r="95.500" />
          </g>

          {/* pivot ball */}
          <circle cx="989.500" cy="285" r="5" fill="#1d6d22" />
          <circle cx="990" cy="285" r="4" fill="#46cf48" />
          <circle cx="991.500" cy="284" r="2" fill="#a9f5a2" />

          {/* orbit cursor */}
          <g stroke="#f5f5f5" strokeWidth="1.100">
            <path d="M1057 299c-2 0-3.500 2-3.500 3.500s1 3 4 3.500M1064 299c2 0 3.500 2 3.500 3.500s-2 3-5 3.500" />
            <path d="M1058 299c0-2 1.500-3.500 2.500-3.500s2.500 1 3 4M1058 306c0 2 1.500 3.500 2.500 3.500s3-1.500 3-4.500" />
            <path d="M1061 298v7M1055 305h6M1057 302l-2.500 3 3 2.500M1061 299l2.500 2.500 2-3" />
          </g>

          {/* ucs icon */}
          <path d="M47 444V399" stroke="#3fae45" strokeWidth="6" />
          <path d="M47 444V398" stroke="#9df59b" strokeWidth="3" />
          <path d="M49 444.500H93" stroke="#b8303f" strokeWidth="5" />
          <path d="M49 443.500H94" stroke="#f07585" strokeWidth="3" />
          <path d="M44 386l6 6 6-6M50 392v6" stroke="#2f9b35" strokeWidth="1.300" />
          <path d="M88 431l11 11M99 431l-11 11" stroke="#b52d38" strokeWidth="1.300" />
          <path d="M46 431.500h11L46 442.500h12" stroke="#2b62c4" strokeWidth="1.300" />
          <circle cx="48" cy="445" r="3.500" fill="#3c92dd" />
          <circle cx="48" cy="444" r="1.300" fill="#e7f6ff" />
        </svg>

        <div className="relative flex items-start justify-between pt-[5px] pr-[10px] pl-0.5 text-[#e3e6e8]">
          <span className="leading-4">[−][Custom View][Wireframe]</span>
          <div className="flex gap-[7px] pt-[3px]">
            <button aria-label="Minimize view" className="flex h-3 w-3 items-end justify-center pb-px">
              <span className="h-[3px] w-[10px] bg-white" />
            </button>
            <button aria-label="Restore view" className="flex h-3 w-3 items-center justify-center">
              <svg viewBox="0 0 10 10" className="h-[10px] w-[10px]" fill="none">
                <path d="M1 4h5v5H1z" stroke="#fff" strokeWidth="2" />
                <path d="M3 1h6.500v6.500" stroke="#e6e6e6" strokeWidth="1.500" />
              </svg>
            </button>
            <button aria-label="Close view" className="flex h-3 w-3 items-center justify-center">
              <svg viewBox="0 0 8 8" className="h-2 w-2" fill="none">
                <path d="M1 0l6 8M7 0L1 8" stroke="#fff" strokeWidth="2" />
              </svg>
            </button>
          </div>
        </div>

        {/* view cube, floats over the drawing */}
        <div className="absolute top-[62px] right-[11px] flex w-[96px] flex-col items-center">
          <button className="h-[35px] w-[35px] border border-[#c4c6c7] bg-[#b0b3b4] text-[9px] leading-none font-bold text-[#50555a]">
            TOP
          </button>
          <svg viewBox="0 0 96 10" className="-mt-0.5 h-[10px] w-[96px]" fill="none">
            <path d="M5 6C18 0 78 0 91 5 78 10 20 10 5 4" stroke="#565d64" strokeWidth="1.300" />
            <path d="M1 4h5M9 4h5M86 4h6" stroke="#a9aeb2" />
            <path d="M44 8.500h9" stroke="#e7eaeb" strokeWidth="1.500" />
          </svg>
        </div>
        <button className="absolute top-[141px] right-[28px] flex h-4 w-[64px] items-center justify-between rounded-sm border border-[#a3a6ad] bg-[#8d9199] px-[3px] text-[9px] leading-none text-[#4a4f5a]">
          Unnamed
          <span className="mr-1 h-0.5 w-[6px] border-t border-[#c3c6cb]" />
        </button>
      </div>
      <div className="w-[7px] border-r border-black bg-linear-to-b from-[#dcebf7] via-[#b6cfe8] via-20% to-[#b9d0e8]" />
    </main>
  );
}

function StatusBar() {
  const tab =
    "flex h-[17px] items-center justify-center rounded-b-md bg-[#505050] pb-0.5 [clip-path:polygon(0_0,100%_0,91%_100%,9%_100%)]";
  return (
    <footer className="flex h-[27px] justify-between border-t border-b border-t-[#55585a] border-b-black bg-[#383838] pr-1">
      <div className="flex pl-2 text-[#b9b9b9]">
        <button className={`${tab} w-[60px] bg-linear-to-b from-[#636363] to-[#808080] font-bold text-white`}>Model</button>
        <button className={`${tab} -ml-1 w-[64px]`}>Layout1</button>
        <button className={`${tab} -ml-1 w-[66px]`}>Layout2</button>
        <button aria-label="New layout" className={`${tab} w-[22px]`}>
          <PlusMark />
        </button>
      </div>
      <p className="self-start pt-[3px] text-[#f2f2f2]">Press ESC or ENTER to exit, or right-click to display shortcut-menu.</p>
    </footer>
  );
}

function App() {
  const [activeTab, setActiveTab] = useState("Home");

  return (
    <div className="flex min-h-screen flex-col bg-[#383838] font-['Open_Sans','Noto_Sans',sans-serif] text-[11px] leading-4 whitespace-nowrap">
      {/* shared gradients for the icons */}
      <svg className="absolute h-0 w-0" aria-hidden="true">
        <defs>
          <linearGradient id="gWhite" x1="0" y1="0" x2="0" y2="1">
            <stop offset="0" stopColor="#ffffff" />
            <stop offset="1" stopColor="#cccccc" />
          </linearGradient>
          <linearGradient id="gGray" x1="0" y1="0" x2="1" y2="0">
            <stop offset="0" stopColor="#d2d2d2" />
            <stop offset="0.400" stopColor="#fbfbfb" />
            <stop offset="1" stopColor="#bdbdbd" />
          </linearGradient>
          <linearGradient id="gBlue" x1="0" y1="0" x2="1" y2="1">
            <stop offset="0" stopColor="#c9e0fa" />
            <stop offset="1" stopColor="#86b4ee" />
          </linearGradient>
        </defs>
      </svg>

      <header className="flex h-[42px] bg-[#525252]">
        <button
          aria-label="Application menu"
          className="flex h-[38px] w-[38px] shrink-0 items-start justify-center border-2 border-t border-[#2a2a2a] bg-linear-to-b from-[#8d8d8d] to-[#686868] pt-0.5"
        >
          <svg viewBox="0 0 24 26" className="h-[26px] w-6 shrink-0">
            <path d="M8 1h8l7 23h-7l-2-6-5 1-2 6H1z" fill="#c91f2d" />
            <path d="M8 1h4L6 22l-5 3z" fill="#9c1824" />
            <path d="M16 1l7 23h-6L11 6z" fill="#e0363f" />
            <path d="M12.500 9L9 17l5.500-1.500z" fill="#8a8a8a" />
            <path d="M2 24c5-3 9-6 11-15" stroke="#ea7d82" fill="none" />
            <path d="M8 19l7-2 1 3-9 2z" fill="#b01a27" />
          </svg>
          <Caret className="mt-[15px] h-1 w-[6px] brightness-25" />
        </button>
        <div className="flex min-w-0 flex-1 flex-col">
          <TitleBar />
          <nav className="flex flex-1 items-end pl-[5px]">
            <div className="flex w-[874px] justify-between">
              {ribbonTabs.map((tab) => (
                <button
                  key={tab}
                  onClick={() => setActiveTab(tab)}
                  className={
                    tab === activeTab
                      ? "h-[18px] border border-b-0 border-[#333] bg-linear-to-b from-[#6c6c6c] to-[#585858] px-[9px] pb-px text-white"
                      : "h-[18px] px-2 pb-0.5 text-[#c4c4c4]"
                  }
                >
                  {tab}
                </button>
              ))}
            </div>
            <button aria-label="Ribbon display" className="mb-[5px] ml-4 flex items-center gap-[6px]">
              <span className="flex h-2 w-3 items-center justify-center rounded-xs bg-[#ececec]">
                <Caret className="h-[3px] w-[5px] rotate-180 brightness-25" />
              </span>
              <Caret />
            </button>
          </nav>
        </div>
      </header>

      <Ribbon />
      <DocumentTabs />
      <Viewport />
      <StatusBar />
    </div>
  );
}

export default App;
